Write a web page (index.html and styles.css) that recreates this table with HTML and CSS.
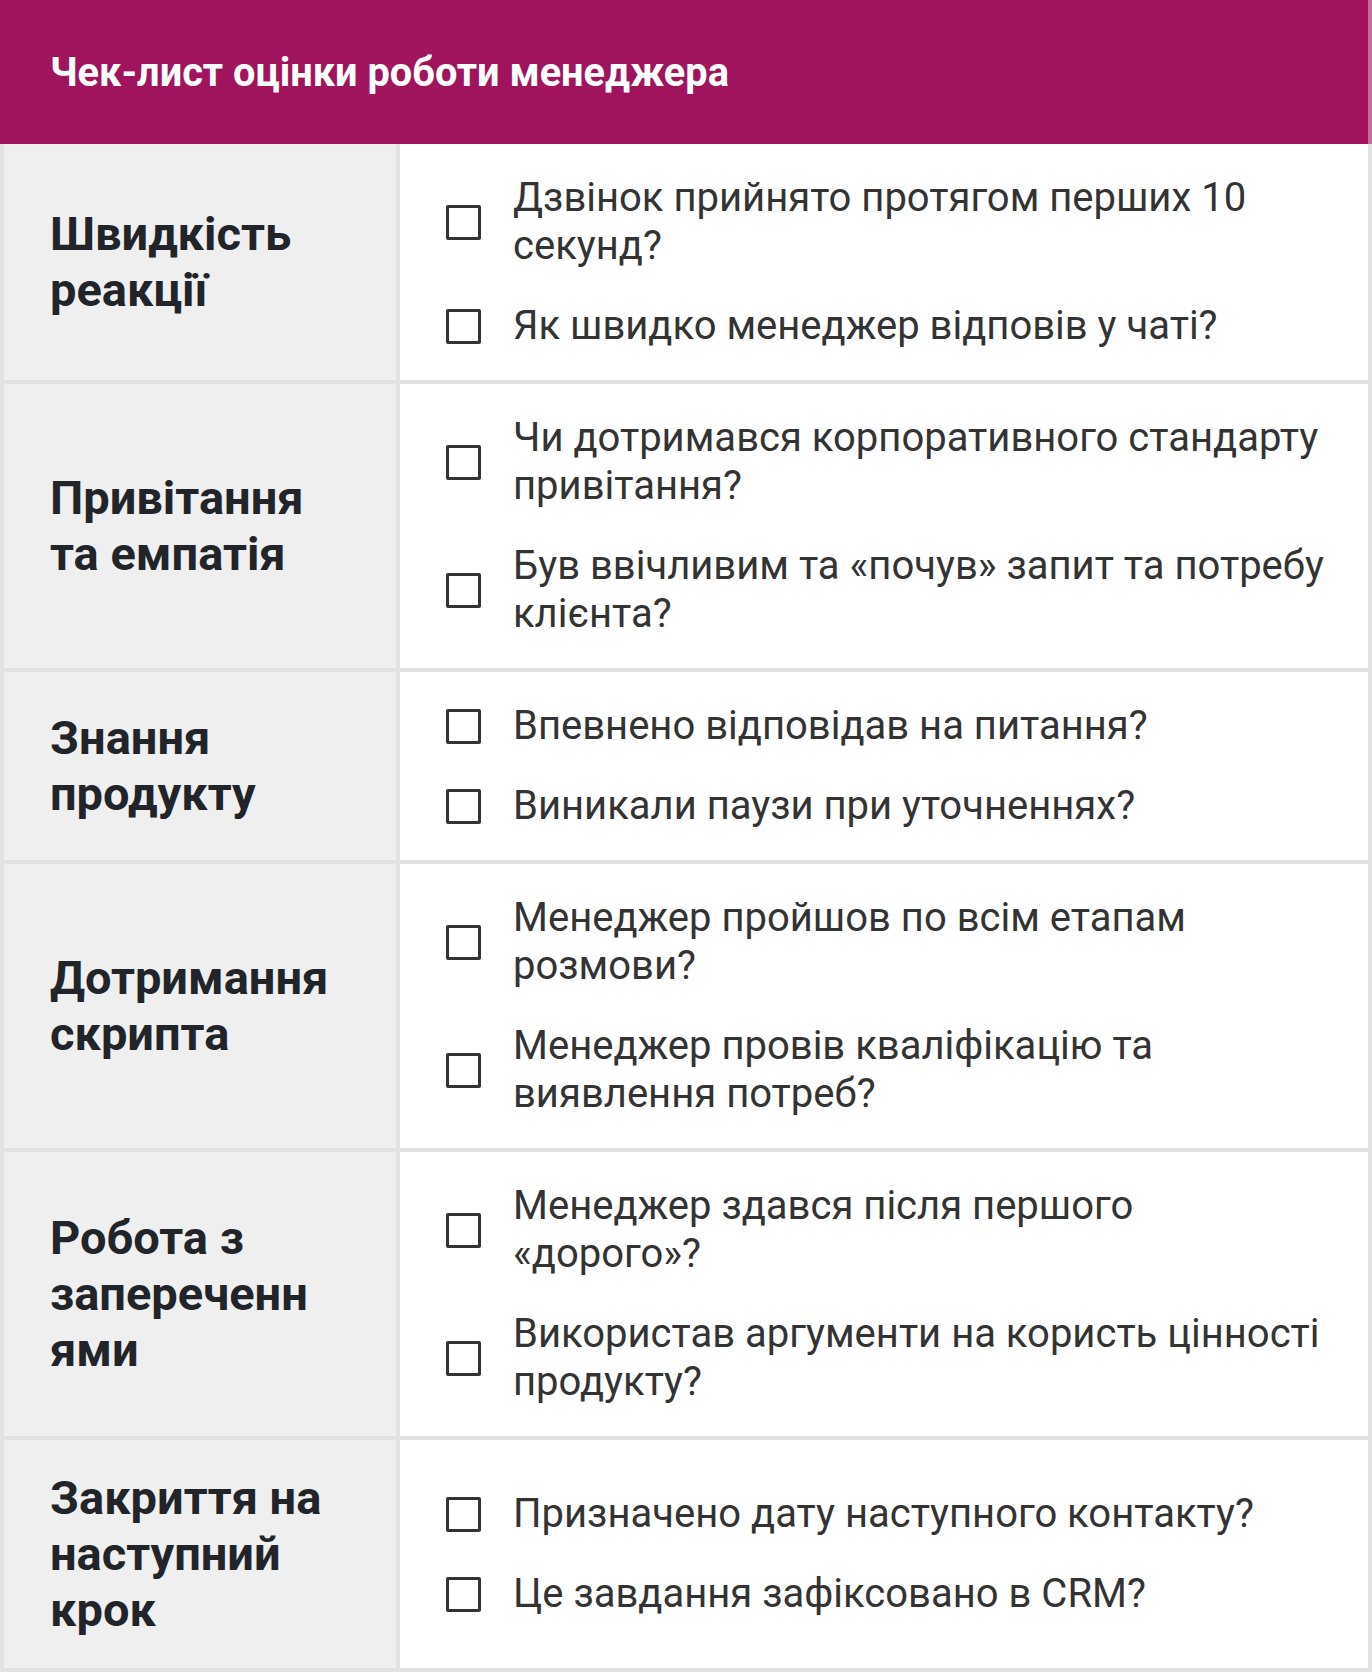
FILE: index.html
```html
<!DOCTYPE html>
<html lang="uk">
<head>
<meta charset="utf-8">
<title>Чек-лист оцінки роботи менеджера</title>
<link rel="stylesheet" href="styles.css">
</head>
<body>
<div class="page">
  <div class="title">Чек-лист оцінки роботи менеджера</div>
  <div class="table">
    <div class="label">Швидкість реакції</div>
    <div class="items">
      <div class="item"><span class="box"></span><span class="text">Дзвінок прийнято протягом перших 10 секунд?</span></div>
      <div class="item"><span class="box"></span><span class="text">Як швидко менеджер відповів у чаті?</span></div>
    </div>

    <div class="label">Привітання та емпатія</div>
    <div class="items">
      <div class="item"><span class="box"></span><span class="text">Чи дотримався корпоративного стандарту привітання?</span></div>
      <div class="item"><span class="box"></span><span class="text">Був ввічливим та «почув» запит та потребу клієнта?</span></div>
    </div>

    <div class="label">Знання продукту</div>
    <div class="items">
      <div class="item"><span class="box"></span><span class="text">Впевнено відповідав на питання?</span></div>
      <div class="item"><span class="box"></span><span class="text">Виникали паузи при уточненнях?</span></div>
    </div>

    <div class="label">Дотримання скрипта</div>
    <div class="items">
      <div class="item"><span class="box"></span><span class="text">Менеджер пройшов по всім етапам розмови?</span></div>
      <div class="item"><span class="box"></span><span class="text">Менеджер провів кваліфікацію та виявлення потреб?</span></div>
    </div>

    <div class="label">Робота з запереченнями</div>
    <div class="items">
      <div class="item"><span class="box"></span><span class="text">Менеджер здався після першого «дорого»?</span></div>
      <div class="item"><span class="box"></span><span class="text">Використав аргументи на користь цінності продукту?</span></div>
    </div>

    <div class="label">Закриття на наступний крок</div>
    <div class="items">
      <div class="item"><span class="box"></span><span class="text">Призначено дату наступного контакту?</span></div>
      <div class="item"><span class="box"></span><span class="text">Це завдання зафіксовано в CRM?</span></div>
    </div>
  </div>
</div>
</body>
</html>
```

FILE: styles.css
```css
* { box-sizing: border-box; }
html, body { margin: 0; padding: 0; background: #ffffff; }
body { font-family: Roboto, "Noto Sans", sans-serif; }

.page { width: 1372px; }

.title {
  height: 144px;
  width: 1372px;
  background: #a0145e;
  border-right: 4px solid #c86a9c;
  color: #ffffff;
  font-size: 39.75px;
  font-weight: 700;
  display: flex;
  align-items: center;
  padding-left: 50px;
}

.table {
  display: grid;
  grid-template-columns: 392px 968px;
  gap: 4px;
  background: #e2e2e2;
  padding: 0 4px 4px 4px;
}

.label {
  background: #efefef;
  color: #212529;
  font-size: 47px;
  font-weight: 700;
  line-height: 56px;
  padding: 30px 66px 30px 46px;
  display: flex;
  align-items: center;
  overflow-wrap: anywhere;
}

.items {
  background: #ffffff;
  padding: 30px 40px 30px 46px;
  display: flex;
  flex-direction: column;
  justify-content: center;
  gap: 32px;
}

.item {
  display: flex;
  align-items: center;
  gap: 32px;
}

.box {
  flex: 0 0 35px;
  width: 35px;
  height: 35px;
  border: 3.5px solid #333333;
  border-radius: 2px;
}

.text {
  color: #333333;
  font-size: 40px;
  line-height: 48px;
}
```
